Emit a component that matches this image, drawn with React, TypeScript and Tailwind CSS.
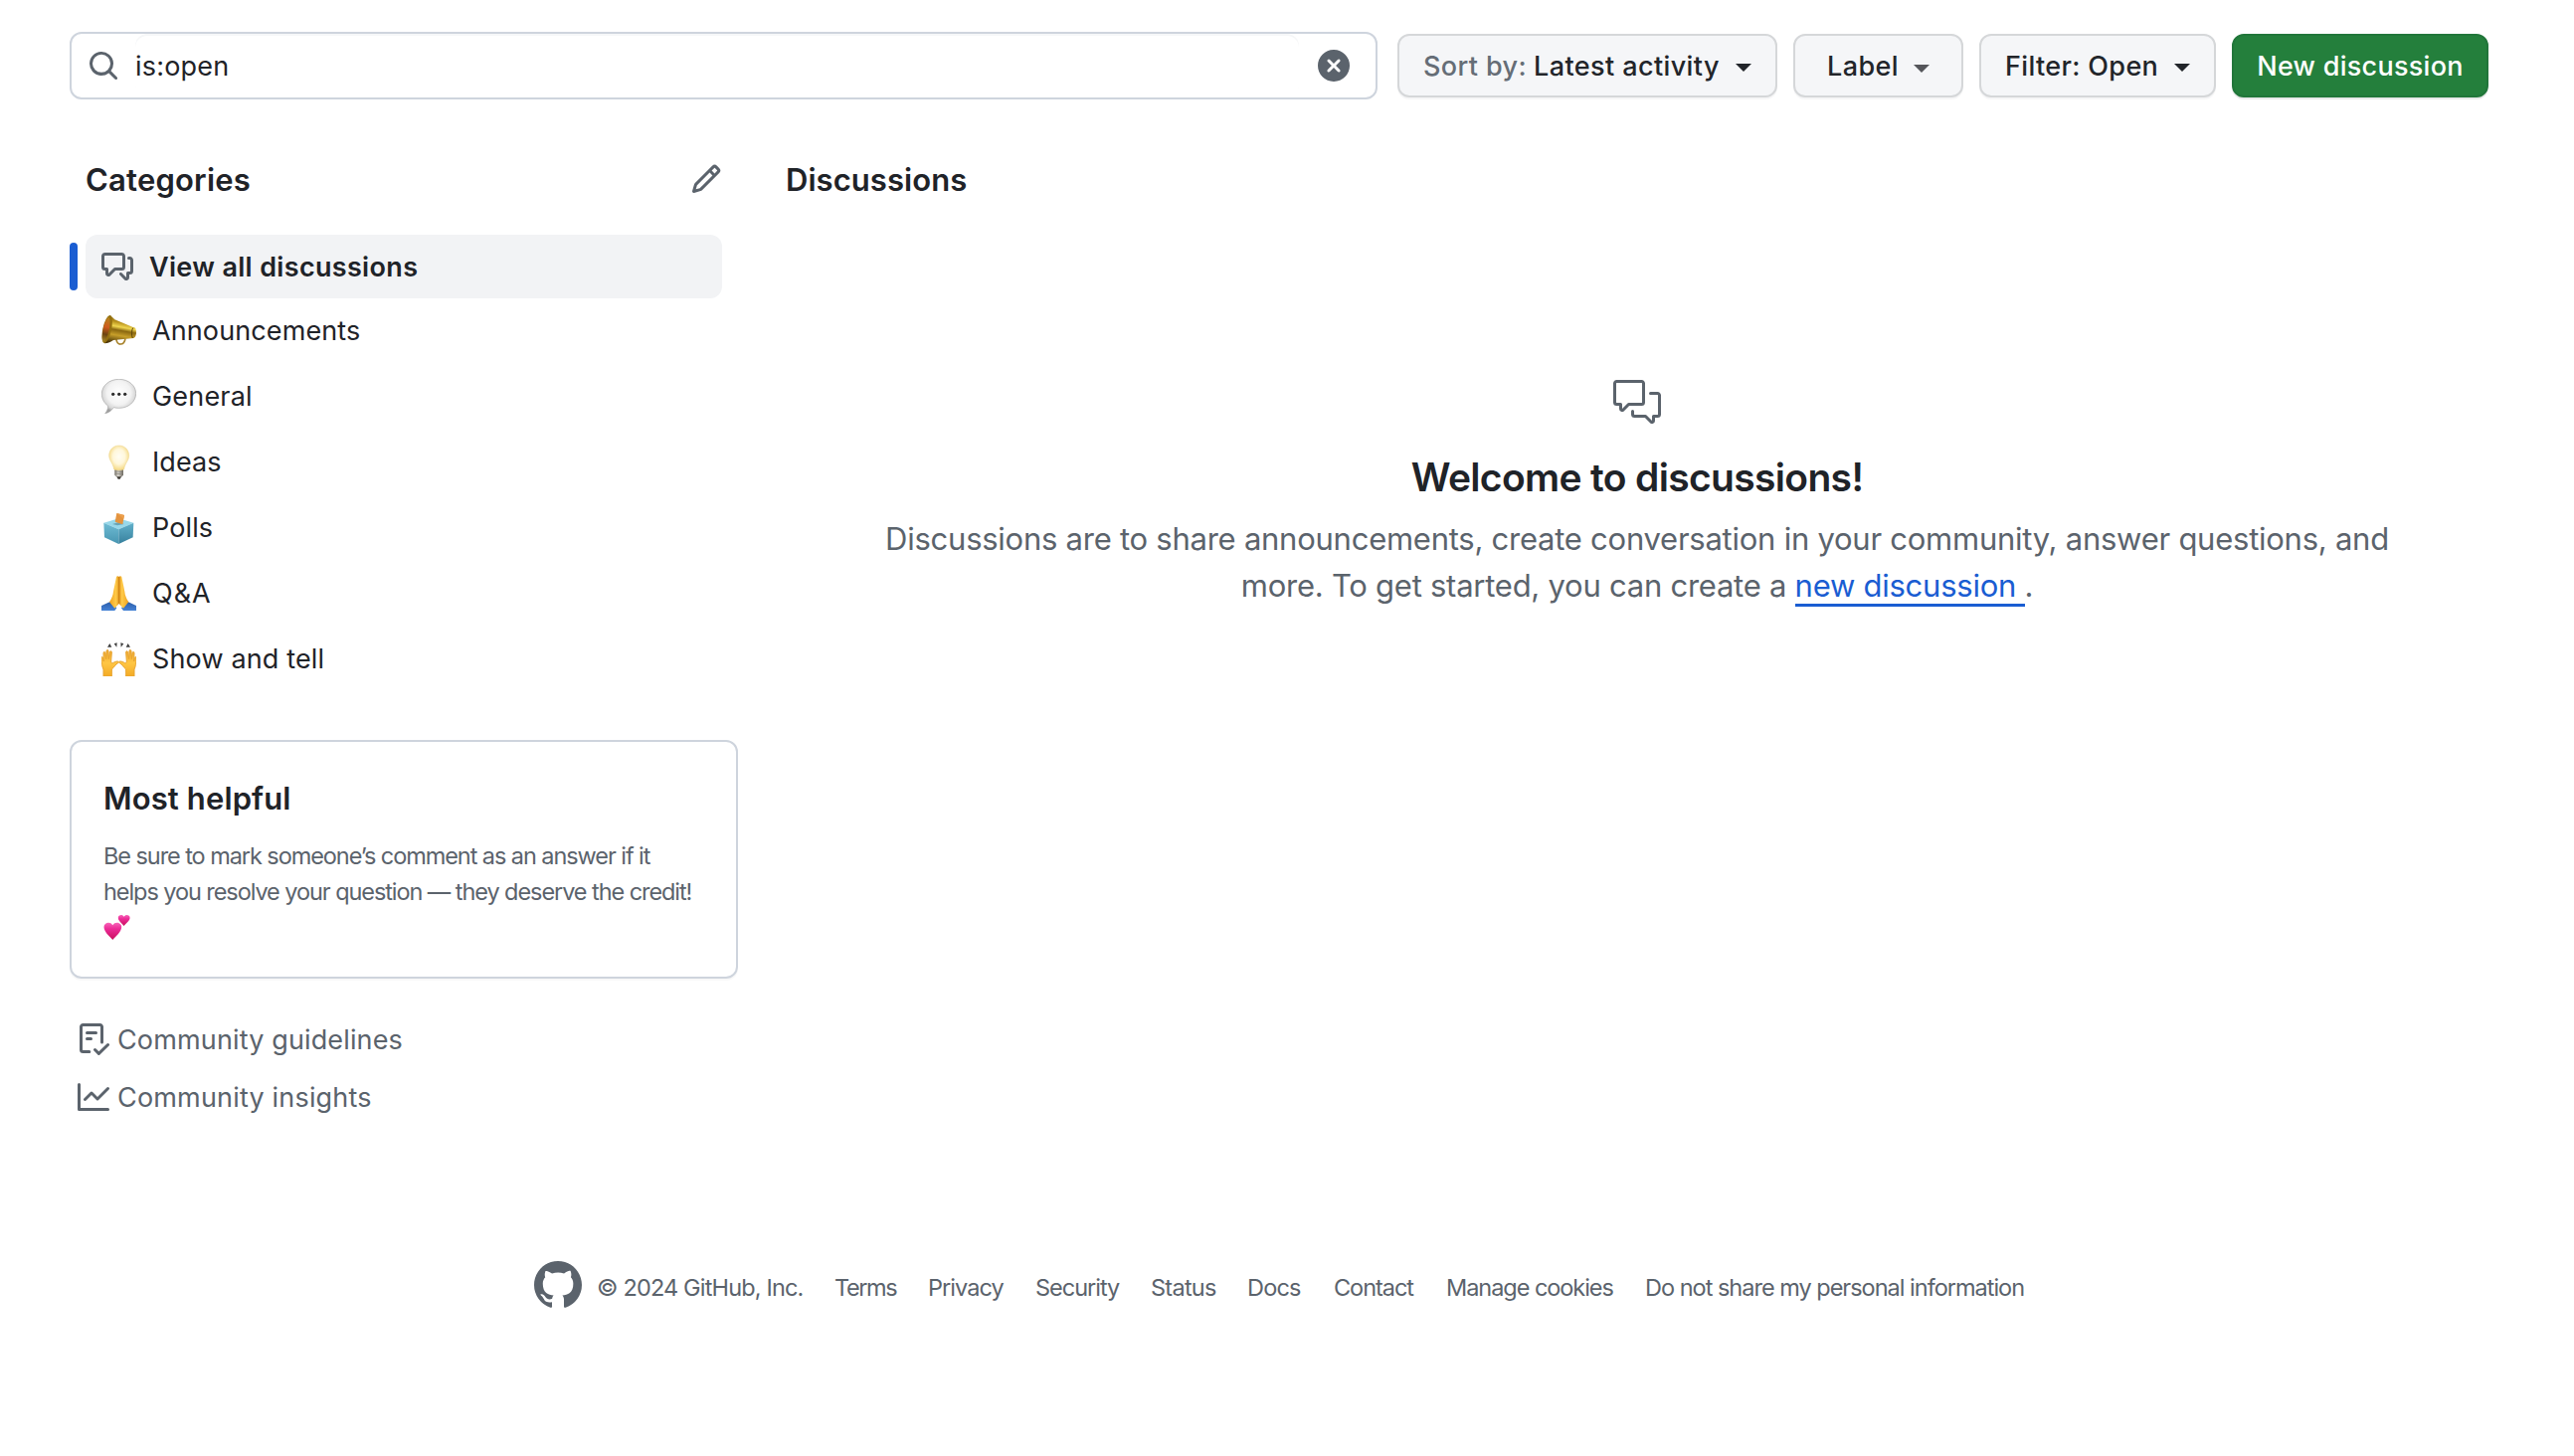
import type { ReactNode } from "react";
import { GoCommentDiscussion } from "react-icons/go";

const paths = {
  search:
    "M10.68 11.74a6 6 0 0 1-7.922-8.982 6 6 0 0 1 8.982 7.922l3.04 3.04a.749.749 0 0 1-.326 1.275.749.749 0 0 1-.734-.215ZM11.5 7a4.499 4.499 0 1 0-8.997 0A4.499 4.499 0 0 0 11.5 7Z",
  clear:
    "M2.343 13.657A8 8 0 1 1 13.658 2.343 8 8 0 0 1 2.343 13.657ZM6.03 4.97a.751.751 0 0 0-1.042.018.751.751 0 0 0-.018 1.042L6.94 8 4.97 9.97a.749.749 0 0 0 .326 1.275.749.749 0 0 0 .734-.215L8 9.06l1.97 1.97a.749.749 0 0 0 1.275-.326.749.749 0 0 0-.215-.734L9.06 8l1.97-1.97a.749.749 0 0 0-.326-1.275.749.749 0 0 0-.734.215L8 6.94Z",
  pencil:
    "M11.013 1.427a1.75 1.75 0 0 1 2.474 0l1.086 1.086a1.75 1.75 0 0 1 0 2.474l-8.61 8.61c-.21.21-.47.364-.756.445l-3.251.93a.75.75 0 0 1-.927-.928l.929-3.25c.081-.286.235-.547.445-.758l8.61-8.61Zm.176 4.823L9.75 4.81l-6.286 6.287a.253.253 0 0 0-.064.108l-.558 1.953 1.953-.558a.253.253 0 0 0 .108-.064Zm1.238-3.763a.25.25 0 0 0-.354 0L10.811 3.75l1.439 1.44 1.263-1.263a.25.25 0 0 0 0-.354Z",
  discussion:
    "M1.75 1h8.5c.966 0 1.75.784 1.75 1.75v5.5A1.75 1.75 0 0 1 10.25 10H7.061l-2.574 2.573A1.458 1.458 0 0 1 2 11.543V10h-.25A1.75 1.75 0 0 1 0 8.25v-5.5C0 1.784.784 1 1.75 1ZM1.5 2.75v5.5c0 .138.112.25.25.25h1a.75.75 0 0 1 .75.75v2.19l2.72-2.72a.749.749 0 0 1 .53-.22h3.5a.25.25 0 0 0 .25-.25v-5.5a.25.25 0 0 0-.25-.25h-8.5a.25.25 0 0 0-.25.25Zm13 2a.25.25 0 0 0-.25-.25h-.5a.75.75 0 0 1 0-1.5h.5c.966 0 1.75.784 1.75 1.75v5.5A1.75 1.75 0 0 1 14.25 12H14v1.543a1.458 1.458 0 0 1-2.487 1.03L9.22 12.28a.749.749 0 0 1 .326-1.275.749.749 0 0 1 .734.215l2.22 2.22v-2.19a.75.75 0 0 1 .75-.75h1a.25.25 0 0 0 .25-.25Z",
  checklist:
    "M2.5 1.75v11.5c0 .138.112.25.25.25h3.17a.75.75 0 0 1 0 1.5H2.75A1.75 1.75 0 0 1 1 13.25V1.75C1 .784 1.784 0 2.75 0h8.5C12.216 0 13 .784 13 1.75v7.736a.75.75 0 0 1-1.5 0V1.75a.25.25 0 0 0-.25-.25h-8.5a.25.25 0 0 0-.25.25Zm13.274 9.537v-.001l-4.557 4.45a.75.75 0 0 1-1.055-.008l-1.943-1.95a.75.75 0 0 1 1.062-1.058l1.419 1.425 4.026-3.932a.75.75 0 1 1 1.048 1.074ZM4.75 4h4.5a.75.75 0 0 1 0 1.5h-4.5a.75.75 0 0 1 0-1.5ZM4 7.75A.75.75 0 0 1 4.75 7h2a.75.75 0 0 1 0 1.5h-2A.75.75 0 0 1 4 7.75Z",
  graph:
    "M1.5 1.75V13.5h13.75a.75.75 0 0 1 0 1.5H.75a.75.75 0 0 1-.75-.75V1.75a.75.75 0 0 1 1.5 0Zm14.28 2.53-5.25 5.25a.75.75 0 0 1-1.06 0L7 7.06 4.28 9.78a.751.751 0 0 1-1.042-.018.751.751 0 0 1-.018-1.042l3.25-3.25a.75.75 0 0 1 1.06 0L10 7.94l4.72-4.72a.751.751 0 0 1 1.042.018.751.751 0 0 1 .018 1.042Z",
  mark: "M8 0c4.42 0 8 3.58 8 8a8.013 8.013 0 0 1-5.45 7.59c-.4.08-.55-.17-.55-.38 0-.27.01-1.13.01-2.2 0-.75-.25-1.23-.54-1.48 1.78-.2 3.65-.88 3.65-3.95 0-.88-.31-1.59-.82-2.15.08-.2.36-1.02-.08-2.12 0 0-.67-.22-2.2.82-.64-.18-1.32-.27-2-.27-.68 0-1.36.09-2 .27-1.53-1.03-2.2-.82-2.2-.82-.44 1.1-.16 1.92-.08 2.12-.51.56-.82 1.28-.82 2.15 0 3.06 1.86 3.75 3.64 3.95-.23.2-.44.55-.51 1.07-.46.21-1.61.55-2.33-.66-.15-.24-.6-.83-1.23-.82-.67.01-.27.38.01.53.34.19.73.9.82 1.13.16.45.68 1.31 2.69.94 0 .67.01 1.3.01 1.49 0 .21-.15.45-.55.38A7.995 7.995 0 0 1 0 8c0-4.42 3.58-8 8-8Z",
};

function Icon({ name, className }: { name: keyof typeof paths; className: string }) {
  return (
    <svg viewBox="0 0 16 16" className={`shrink-0 fill-current ${className}`} aria-hidden="true">
      <path d={paths[name]} />
    </svg>
  );
}

function Caret({ className }: { className: string }) {
  return (
    <svg viewBox="0 0 16 8" className={`h-2 w-4 shrink-0 fill-current ${className}`} aria-hidden="true">
      <path d="M0 0h16L8 8Z" />
    </svg>
  );
}

function Emoji({ children }: { children: ReactNode }) {
  return (
    <svg viewBox="0 0 105 105" className="size-[35px] shrink-0" aria-hidden="true">
      {children}
    </svg>
  );
}

const megaphone = (
  <Emoji>
    <defs>
      <linearGradient id="brass" x1="0.6" y1="0" x2="0.4" y2="1">
        <stop offset="0" stopColor="#6f520c" />
        <stop offset="0.26" stopColor="#b8911c" />
        <stop offset="0.42" stopColor="#f0d650" />
        <stop offset="0.54" stopColor="#8a6710" />
        <stop offset="0.72" stopColor="#c79f2a" />
        <stop offset="1" stopColor="#4a3507" />
      </linearGradient>
      <linearGradient id="bell" x1="0" y1="0" x2="0" y2="1">
        <stop offset="0" stopColor="#b5841c" />
        <stop offset="0.4" stopColor="#cf5a1d" />
        <stop offset="0.7" stopColor="#6c4410" />
        <stop offset="1" stopColor="#a88a28" />
      </linearGradient>
    </defs>
    <path d="M45 78c0 20 24 21 27-2" fill="none" stroke="#a8832c" strokeWidth="5" />
    <path d="M26 6c6 5 10 9 14 13l57 24c7 0 8 8 8 15s-3 17-8 17l-61 6c-8 5-15 9-27 10Z" fill="url(#brass)" />
    <path d="M95 44c-4 6-5 23-1 31" fill="none" stroke="#5e460a" strokeWidth="3" />
    <ellipse cx="17" cy="48" rx="13" ry="43" transform="rotate(12 17 48)" fill="#94700f" />
    <ellipse cx="14" cy="49" rx="9" ry="37" transform="rotate(12 14 49)" fill="url(#bell)" />
  </Emoji>
);

const speech = (
  <Emoji>
    <defs>
      <radialGradient id="bubble" cx="0.5" cy="0.4" r="0.58">
        <stop offset="0" stopColor="#ffffff" />
        <stop offset="0.6" stopColor="#f2f2f2" />
        <stop offset="0.85" stopColor="#d6d6d6" />
        <stop offset="1" stopColor="#9c9c9c" />
      </radialGradient>
    </defs>
    <path
      d="M53 1c29 0 51 19 51 43S82 88 53 88c-6 0-11-.6-16-2-6 9-15 16-26 18 6-7 9-14 9-23C8 73 1 60 1 45 1 20 24 1 53 1Z"
      fill="url(#bubble)"
      stroke="#a9a9a9"
      strokeWidth="2"
    />
    <g fill="#2c2c2c">
      <circle cx="35" cy="46" r="5" />
      <circle cx="53" cy="46" r="5" />
      <circle cx="71" cy="46" r="5" />
    </g>
  </Emoji>
);

const bulb = (
  <Emoji>
    <defs>
      <radialGradient id="glow" cx="0.5" cy="0.45" r="0.55">
        <stop offset="0" stopColor="#fffdf3" />
        <stop offset="0.55" stopColor="#fff7da" />
        <stop offset="1" stopColor="#f5d983" />
      </radialGradient>
      <linearGradient id="screw" x1="0" x2="1">
        <stop offset="0" stopColor="#77736a" />
        <stop offset="0.4" stopColor="#dad7cf" />
        <stop offset="1" stopColor="#6c6860" />
      </linearGradient>
    </defs>
    <path d="M40 72h26v20l-6 6H46l-6-6Z" fill="url(#screw)" />
    <path d="M40 80l26 3M40 87l26 3" stroke="#7e7a70" strokeWidth="2" />
    <path d="M46 97h14l-4 7h-6Z" fill="#3c3933" />
    <path
      d="M53 3c17 0 30 13 30 30 0 16-12 22-15 42-6 3-24 3-30 0C35 55 23 49 23 33 23 16 36 3 53 3Z"
      fill="url(#glow)"
      stroke="#ecd48c"
      strokeWidth="1.5"
    />
  </Emoji>
);

const ballot = (
  <Emoji>
    <defs>
      <linearGradient id="boxLeft" x1="0" y1="0" x2="0" y2="1">
        <stop offset="0" stopColor="#6fbcd4" />
        <stop offset="1" stopColor="#4795b1" />
      </linearGradient>
      <linearGradient id="boxRight" x1="0" y1="0" x2="0" y2="1">
        <stop offset="0" stopColor="#62b1cb" />
        <stop offset="1" stopColor="#37809d" />
      </linearGradient>
    </defs>
    <path d="M7 38 52 25 97 38 52 58Z" fill="#98d8ea" />
    <path d="M7 38 52 58V102L9 82Z" fill="url(#boxLeft)" />
    <path d="M97 38 52 58V102L95 82Z" fill="url(#boxRight)" />
    <path d="M33 42 52 36 68 42 48 46Z" fill="#6aa4b5" />
    <path d="M46 9 69 15 64 43 41 35Z" fill="#e4943f" />
    <path d="M46 9 69 15 67 26Z" fill="#ec9f4c" />
  </Emoji>
);

const pray = (
  <Emoji>
    <defs>
      <linearGradient id="palms" x1="0" x2="1">
        <stop offset="0" stopColor="#f0a21e" />
        <stop offset="0.35" stopColor="#ffcb4a" />
        <stop offset="0.5" stopColor="#e0921a" />
        <stop offset="0.65" stopColor="#ffcb4a" />
        <stop offset="1" stopColor="#f0a21e" />
      </linearGradient>
      <linearGradient id="sleeve" x1="0" y1="0" x2="0" y2="1">
        <stop offset="0" stopColor="#2a5ba6" />
        <stop offset="1" stopColor="#4683d6" />
      </linearGradient>
    </defs>
    <path d="M0 90 28 77 46 97 40 105H0Z" fill="url(#sleeve)" />
    <path d="M105 90 78 77 60 97 66 105H105Z" fill="url(#sleeve)" />
    <path
      d="M45 3c1-3 7-3 8 0 1-3 7-3 8 0l9 44c1 12 5 20 12 32L66 98C61 91 56 88 53 84c-3 4-8 7-13 14L24 79c7-12 11-20 12-32Z"
      fill="url(#palms)"
    />
    <path d="M53 3v80" stroke="#c47a14" strokeWidth="2" />
  </Emoji>
);

const raisedHand =
  "M6 105V84C2 76 1 68 0 50c0-5 4-5 5 0l2 10L6 35c0-5 5-5 6 0l2 18 1-24c1-5 6-5 6 0l1 24 3-21c1-4 6-4 6 1l-2 27c1 5 2 6 5 5 5-3 10-5 15-5 4 1 4 4 1 5-8 4-12 14-19 19v21Z";

const raised = (
  <Emoji>
    <defs>
      <linearGradient id="skin" x1="0" y1="0" x2="0" y2="1">
        <stop offset="0" stopColor="#eda72e" />
        <stop offset="0.5" stopColor="#ffc644" />
        <stop offset="1" stopColor="#f3aa25" />
      </linearGradient>
    </defs>
    <path d={raisedHand} fill="url(#skin)" stroke="#e8a430" strokeWidth="3" />
    <path d={raisedHand} fill="url(#skin)" stroke="#e8a430" strokeWidth="3" transform="translate(105 0) scale(-1 1)" />
    <path d="M25 6 31 17 18 17ZM38 7 47 4 46 17ZM67 7 58 4 59 17ZM80 6 74 17 87 17Z" fill="#3f3f3f" />
  </Emoji>
);

function Hearts() {
  return (
    <svg viewBox="0 0 27 27" className="mt-1 size-[27px]" aria-hidden="true">
      <defs>
        <linearGradient id="heart" x1="0" y1="0" x2="0" y2="1">
          <stop offset="0" stopColor="#f765b8" />
          <stop offset="0.35" stopColor="#ec2c98" />
          <stop offset="1" stopColor="#c90d5c" />
        </linearGradient>
      </defs>
      <path d="M9.3 26C6 22 .5 18 .5 13 .5 8.500 7 7 9.300 11.300 11.600 7 18.200 8.500 18.200 13c0 5-5.600 9-8.900 13Z" fill="url(#heart)" />
      <path d="M20.600 12C18.500 9.300 14.800 7 14.800 3.800 14.800.700 19.200 0 20.700 2.700 22.200 0 26.600.700 26.600 3.800c0 3.200-3.900 5.500-6 8.200Z" fill="url(#heart)" />
    </svg>
  );
}

const categories = [
  { label: "Announcements", icon: megaphone, tracking: "tracking-[0.11px]" },
  { label: "General", icon: speech, tracking: "tracking-[0.18px]" },
  { label: "Ideas", icon: bulb, tracking: "tracking-[0.1px]" },
  { label: "Polls", icon: ballot, tracking: "tracking-[0.1px]" },
  { label: "Q&A", icon: pray, tracking: "tracking-[1px]" },
  { label: "Show and tell", icon: raised, tracking: "tracking-[0.14px]" },
];

const footerLinks = [
  { label: "© 2024 GitHub, Inc.", className: "w-[239px] tracking-[-0.84px]" },
  { label: "Terms", className: "w-[94px] tracking-[-1.4px]" },
  { label: "Privacy", className: "w-[108px] tracking-[-0.95px]" },
  { label: "Security", className: "w-[116px] tracking-[-1.02px]" },
  { label: "Status", className: "w-[97px] tracking-[-0.73px]" },
  { label: "Docs", className: "w-[87px] tracking-[-0.82px]" },
  { label: "Contact", className: "w-[113px] tracking-[-1.05px]" },
  { label: "Manage cookies", className: "w-[200px] tracking-[-1.05px]" },
  { label: "Do not share my personal information", className: "tracking-[-1px]" },
];

function MenuButton({ className, children }: { className: string; children: ReactNode }) {
  return (
    <button
      className={`flex h-16 shrink-0 items-start rounded-xl border-2 border-[#d5d7d9] bg-[#f5f6f8] pt-[14px] text-[27px] leading-[33px] font-medium whitespace-nowrap text-[#22252a] shadow-[0_2px_0_rgba(31,35,40,0.04)] ${className}`}
    >
      {children}
    </button>
  );
}

export default function App() {
  return (
    <div className="h-[1464px] w-[2588px] overflow-hidden bg-white pt-8 pl-[70px] font-[Inter,sans-serif] text-[#1f2328]">
      <header className="flex h-[68px] items-start">
        <div className="flex h-[68px] w-[1315px] items-start rounded-xl border-2 border-[#ced4dd] pl-4 text-[#5b636c]">
          <Icon name="search" className="mt-4 size-8" />
          <div className="ml-4 h-[62px] w-[1170px] rounded-xl pt-4 text-[27px] leading-[33px] tracking-[0.2px] text-[#1f2328] shadow-[inset_0_2px_0_rgba(208,215,222,0.2)]">
            is:open
          </div>
          <Icon name="clear" className="mt-4 ml-[19px] size-8" />
        </div>
        <MenuButton className="mt-0.5 ml-5 w-[382px] pl-6">
          <span className="tracking-[0.39px] text-[#656d76]">Sort by:</span>
          <span className="ml-[7px] tracking-[0.4px]">Latest activity</span>
          <Caret className="mt-[14px] ml-4" />
        </MenuButton>
        <MenuButton className="mt-0.5 ml-4 w-[171px] pl-8">
          <span className="w-[87px] text-left tracking-[0.4px]">Label</span>
          <Caret className="mt-[15px] text-[#55565b]" />
        </MenuButton>
        <MenuButton className="mt-0.5 ml-4 w-[238px] pl-6">
          <span className="w-[170px] text-left tracking-[0.35px]">Filter: Open</span>
          <Caret className="mt-[14px]" />
        </MenuButton>
        <button className="mt-0.5 ml-4 h-16 w-[258px] rounded-xl border-2 border-[#21763a] bg-[#247f3c] pt-3.5 pb-[13px] text-[27px] leading-[33px] font-medium tracking-[0.27px] whitespace-nowrap text-white shadow-[0_2px_0_rgba(31,35,40,0.1)]">
          New discussion
        </button>
      </header>

      <div className="mt-[62px] flex h-[1106px]">
        <aside className="w-[718px] shrink-0">
          <div className="flex h-[74px] items-start pl-4">
            <h2 className="w-[608px] text-[31px] leading-[37px] font-semibold tracking-[0.2px]">Categories</h2>
            <Icon name="pencil" className="mt-0.5 size-8 text-[#5b636c]" />
          </div>

          <nav>
            <div className="flex h-16 items-center">
              <div className="h-12 w-2 rounded-full bg-[#1a5dd2]" />
              <div className="ml-2 flex h-16 w-[640px] items-start rounded-xl bg-[#f2f3f5] pt-4 pl-4">
                <Icon name="discussion" className="size-8 text-[#5b636c]" />
                <span className="ml-4 text-[27px] leading-[33px] font-semibold tracking-[0.33px]">
                  View all discussions
                </span>
              </div>
            </div>
            {categories.map((c) => (
              <div key={c.label} className="flex h-[66px] items-start pt-[15px] pl-8">
                {c.icon}
                <span className={`mt-px ml-4 text-[27px] leading-[33px] ${c.tracking}`}>{c.label}</span>
              </div>
            ))}
          </nav>

          <section className="mt-12 h-[240px] w-[672px] rounded-xl border-2 border-[#ced4dd] pt-[38px] pl-8 shadow-[0_2px_0_rgba(31,35,40,0.03)]">
            <h3 className="text-[31px] leading-[37px] font-semibold tracking-[0.12px]">Most helpful</h3>
            <p className="pt-[22px] text-[23.500px] leading-9 tracking-[-1.07px] whitespace-nowrap text-[#5b636c]">
              Be sure to mark someone’s comment as an answer if it
              <br />
              helps you resolve your question — they deserve the credit!
            </p>
            <Hearts />
          </section>

          <div className="mt-[45px] flex flex-col gap-[25px] pl-2 text-[27px] leading-[33px] text-[#5b636c]">
            <a className="flex items-start">
              <Icon name="checklist" className="size-8" />
              <span className="ml-2 tracking-[0.14px]">Community guidelines</span>
            </a>
            <a className="flex items-start">
              <Icon name="graph" className="size-8" />
              <span className="ml-2 tracking-[0.18px]">Community insights</span>
            </a>
          </div>
        </aside>

        <main className="w-[1716px] shrink-0">
          <h2 className="pl-0.5 text-[31px] leading-[37px] font-semibold tracking-[0.06px]">Discussions</h2>
          <div className="flex flex-col items-center pt-[181px]">
            <GoCommentDiscussion className="size-12 text-[#5b636c]" />
            <h3 className="mt-[28px] text-[39px] leading-[47px] font-semibold tracking-[-0.66px]">
              Welcome to discussions!
            </h3>
            <p className="mt-[15px] flex flex-col items-center text-[31px] leading-[48px] tracking-[-0.25px] whitespace-pre text-[#5b636c]">
              <span>
                Discussions are to share announcements, create conversation in your community, answer questions, and
              </span>
              <span className="-mt-px flex">
                <span>{"more. To get started, you can create a "}</span>
                <a className="h-[45px] border-b-[3px] border-[#1a5dd2] text-[#1a5dd2]">{"new discussion "}</a>
                <span>.</span>
              </span>
            </p>
          </div>
        </main>
      </div>

      <footer className="flex items-start pl-[467px] text-[#5b636c]">
        <Icon name="mark" className="size-12" />
        <div className="ml-[15px] flex pt-[12px] text-[23.500px] leading-[29px] whitespace-nowrap">
          {footerLinks.map((link) => (
            <a key={link.label} className={link.className}>
              {link.label}
            </a>
          ))}
        </div>
      </footer>
    </div>
  );
}
